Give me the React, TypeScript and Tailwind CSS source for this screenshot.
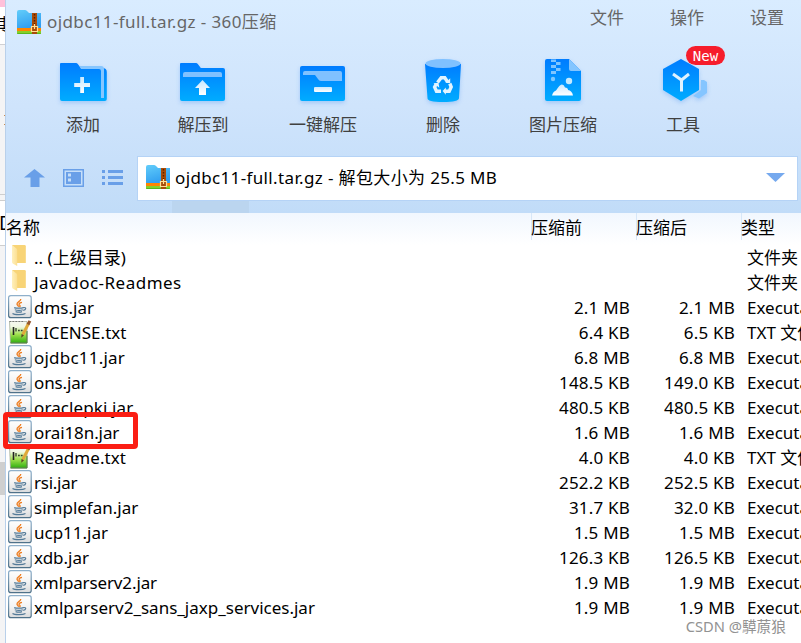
import React from "react";

const latin = "font-['Noto_Sans','Noto_Sans_CJK_SC',sans-serif]";

type Entry = { name: string; kind: "folder" | "jar" | "txt"; before?: string; after?: string; type: string; track?: string };

const entries: Entry[] = [
  { name: ".. (上级目录)", kind: "folder", type: "文件夹" },
  { name: "Javadoc-Readmes", kind: "folder", type: "文件夹", track: "tracking-[0.48px]" },
  { name: "dms.jar", kind: "jar", before: "2.1 MB", after: "2.1 MB", type: "Executable" },
  { name: "LICENSE.txt", kind: "txt", before: "6.4 KB", after: "6.5 KB", type: "TXT 文件" },
  { name: "ojdbc11.jar", kind: "jar", before: "6.8 MB", after: "6.8 MB", type: "Executable", track: "tracking-[0.22px]" },
  { name: "ons.jar", kind: "jar", before: "148.5 KB", after: "149.0 KB", type: "Executable", track: "tracking-[-0.15px]" },
  { name: "oraclepki.jar", kind: "jar", before: "480.5 KB", after: "480.5 KB", type: "Executable", track: "tracking-[0.1px]" },
  { name: "orai18n.jar", kind: "jar", before: "1.6 MB", after: "1.6 MB", type: "Executable", track: "tracking-[-0.1px]" },
  { name: "Readme.txt", kind: "txt", before: "4.0 KB", after: "4.0 KB", type: "TXT 文件", track: "tracking-[0.05px]" },
  { name: "rsi.jar", kind: "jar", before: "252.2 KB", after: "252.5 KB", type: "Executable", track: "tracking-[-0.25px]" },
  { name: "simplefan.jar", kind: "jar", before: "31.7 KB", after: "32.0 KB", type: "Executable" },
  { name: "ucp11.jar", kind: "jar", before: "1.5 MB", after: "1.5 MB", type: "Executable" },
  { name: "xdb.jar", kind: "jar", before: "126.3 KB", after: "126.5 KB", type: "Executable" },
  { name: "xmlparserv2.jar", kind: "jar", before: "1.9 MB", after: "1.9 MB", type: "Executable", track: "tracking-[-0.13px]" },
  { name: "xmlparserv2_sans_jaxp_services.jar", kind: "jar", before: "1.9 MB", after: "1.9 MB", type: "Executable" },
];

function Defs() {
  return (
    <svg width="0" height="0" className="absolute">
      <defs>
        <linearGradient id="blue" x1="0" y1="0" x2="0" y2="1">
          <stop offset="0" stopColor="#007cff" />
          <stop offset="1" stopColor="#00acff" />
        </linearGradient>
        <linearGradient id="pale" x1="0" y1="0" x2="0" y2="1">
          <stop offset="0" stopColor="#c9e8ff" />
          <stop offset="1" stopColor="#ffffff" />
        </linearGradient>
        <linearGradient id="sky" x1="0" y1="0" x2="0.4" y2="1">
          <stop offset="0" stopColor="#62cdfa" />
          <stop offset="1" stopColor="#2f9df0" />
        </linearGradient>
        <linearGradient id="silver" x1="0" y1="0" x2="0" y2="1">
          <stop offset="0" stopColor="#ffffff" />
          <stop offset="0.5" stopColor="#f4f4f4" />
          <stop offset="1" stopColor="#dadbdc" />
        </linearGradient>
        <linearGradient id="rim" x1="0" y1="0" x2="0" y2="1">
          <stop offset="0" stopColor="#8fb0cb" />
          <stop offset="1" stopColor="#4e7189" />
        </linearGradient>
        <linearGradient id="grass" x1="0" y1="0" x2="0" y2="1">
          <stop offset="0" stopColor="#f6f8f1" />
          <stop offset="0.25" stopColor="#f0f8e2" />
          <stop offset="0.6" stopColor="#9fe04d" />
          <stop offset="1" stopColor="#2fae10" />
        </linearGradient>
        <linearGradient id="gold" x1="0" y1="0" x2="1" y2="0">
          <stop offset="0" stopColor="#fff0bd" />
          <stop offset="1" stopColor="#fbdf92" />
        </linearGradient>
      </defs>
    </svg>
  );
}

function ArchiveIcon() {
  return (
    <svg width="25" height="25" viewBox="0 0 25 25" className="shrink-0">
      <path d="M0 2q0-2 2-2h6q1 0 2 1l2 2h12v16H0z" fill="url(#sky)" />
      <path d="M0 18h24v3H0z" fill="#ff8500" />
      <path d="M0 21h24v2q0 1-1 1H1q-1 0-1-1z" fill="#86cf2a" />
      <path d="M0 23h24q0 1-1 1H1q-1 0-1-1z" fill="#58b81e" />
      <path d="M15 3h5v21h-5z" fill="#a94b08" />
      <path d="M17.500 4v11" stroke="#572100" strokeWidth="1.400" strokeDasharray="1.500 1.500" />
      <path d="M14.500 16.500h6v5h-6zM17.500 14v5" fill="none" stroke="#ffdf94" strokeWidth="1.200" />
    </svg>
  );
}

function JarIcon() {
  return (
    <svg width="24" height="24" viewBox="0 0 24 24">
      <rect x="0.600" y="0.600" width="22.600" height="22" rx="2.200" fill="url(#silver)" stroke="url(#rim)" strokeWidth="1.200" />
      <path d="M12.800 4C13 6.400 8.400 7 9 9.300c.3 1 1.400 1.700 1.800 2.500M14 7.400c-3 .6-3.700 1.800-2.300 2.800.8.700.5 1.300-.3 1.800" fill="none" stroke="#ee7d20" strokeWidth="1.300" />
      <path d="M6.200 12.600c2 .8 7.300.7 9.200 0M6.800 14.700q4.300 1.300 8 0M7.600 16.600q3.500 1.100 6.400 0M15.400 12.600c3.300-.6 2.800 2.300-.2 2.700M4.500 18.400c2 1.500 10.400 1.500 13 0" fill="none" stroke="#537a98" strokeWidth="1.200" />
    </svg>
  );
}

function TxtIcon() {
  return (
    <svg width="24" height="24" viewBox="0 0 24 24" className="overflow-visible">
      <path d="M1.500 1.500h17.500v21.500H2.500z" fill="url(#grass)" stroke="#9aa392" strokeWidth=".7" />
      <path d="M1.500 1.500h14" stroke="#777" strokeWidth="1" strokeDasharray="1.500 1.500" />
      <path d="M19 11v12H2.500" fill="none" stroke="#4f7a38" strokeWidth="1" />
      <path d="M5.500 7v8" stroke="#222" strokeWidth="1.600" />
      <path d="M8 8v3.500M10 10.500h1.800M12.800 10.500h1.800" stroke="#33402b" strokeWidth="1.300" />
      <path d="M20.800 3l-6 11.500" stroke="#dfa93a" strokeWidth="3" />
      <path d="M20 4.500l1.900-3.600" stroke="#94572d" strokeWidth="3" />
      <path d="M16 15.300l-2.700 2.400.2-3.800z" fill="#5b4021" />
    </svg>
  );
}

function FolderIcon() {
  return (
    <svg width="24" height="24" viewBox="0 0 24 24">
      <path d="M4 0h12.500q1.300 0 1.300 1.300V18H8z" fill="#f8d477" />
      <path d="M4 0l4.500 3.500q.7.500.7 1.500v16L5 18.800Q4 18.300 4 17z" fill="url(#gold)" />
    </svg>
  );
}

const shadow = "drop-shadow-[0_2px_2px_rgba(80,150,240,0.35)]";

function AddIcon() {
  return (
    <svg width="48" height="48" viewBox="0 0 48 48" className={shadow}>
      <path d="M1 8q0-1 1-1h15q1 0 1.800 1l3 4h21.500q4.500 0 4.500 4v27q0 2-2 2H3q-2 0-2-2z" fill="url(#blue)" />
      <path d="M20.500 10h21.500q3 0 3 3v29h-3V15q0-2-2-2H22z" fill="#86c6ff" />
      <path d="M21.200 21h3.800v6h6v4h-6v6h-3.800v-6h-6v-4h6z" fill="url(#pale)" />
    </svg>
  );
}

function ExtractIcon() {
  return (
    <svg width="48" height="48" viewBox="0 0 48 48" className={shadow}>
      <path d="M1 8q0-1 1-1h15q1 0 1.800 1l3 4H44q2 0 2 2v29q0 2-2 2H3q-2 0-2-2z" fill="url(#blue)" />
      <path d="M4 21v-3q0-2 2-2h35q2 0 2 2v3z" fill="#80c1ff" />
      <path d="M23.500 24l7.500 8h-4v7h-7v-7h-4z" fill="url(#pale)" />
    </svg>
  );
}

function QuickIcon() {
  return (
    <svg width="48" height="48" viewBox="0 0 48 48" className={shadow}>
      <rect x="1" y="10" width="45" height="35" rx="2" fill="url(#blue)" />
      <path d="M4 19v-2q0-2 2-2h35q2 0 2 2v8H22q-2 0-3-2l-3-4z" fill="#80c1ff" />
      <rect x="15" y="31" width="18" height="5" rx="1" fill="url(#pale)" />
    </svg>
  );
}

function TrashIcon() {
  return (
    <svg width="48" height="48" viewBox="0 0 48 48" className={shadow}>
      <path d="M6 8h36l-2 34q0 4-16 4T8.500 42z" fill="url(#blue)" />
      <ellipse cx="24" cy="7.500" rx="17.500" ry="4.500" fill="#80c1ff" />
      <g fill="none" stroke="#e3f4ff" strokeWidth="3.400">
        <path d="M18.500 26.500l3.700-4.700h3.600l2.700 4" />
        <path d="M30.800 27.500l1.400 3.500-2 4.300h-4.700" />
        <path d="M22 35.300h-4.500L15.600 31l1.500-2.600" />
      </g>
      <path d="M26.500 27h4.700v-4.800zM26.800 31.500v7.200l-3.200-3.600zM14.500 27.300l5-.5.8 5z" fill="#e3f4ff" />
    </svg>
  );
}

function PictureIcon() {
  return (
    <svg width="48" height="48" viewBox="0 0 48 48" className={shadow}>
      <path d="M8 3h22l12 12v28q0 2-2 2H8q-2 0-2-2V5q0-2 2-2z" fill="url(#blue)" />
      <path d="M30 3l12 12H32q-2 0-2-2z" fill="#83c5ff" />
      <path d="M12 3.500h5V6h-5zM17 6h4.500v3H17zM12 9h5v3h-5zM17 12h4.500v3H17zM12 15h5v3h-5z" fill="#7fc5ff" />
      <circle cx="14" cy="23" r="2.200" fill="#7fc8ff" />
      <circle cx="30" cy="25" r="3.200" fill="#c5eaff" />
      <path d="M13 39.500q1-4 4-5 4-6.500 6-6 2 .2 3 3 3 .2 3 2.500 4 .5 5 5.500z" fill="url(#pale)" />
    </svg>
  );
}

function ToolIcon() {
  return (
    <svg width="48" height="48" viewBox="0 0 48 48" className={`${shadow} overflow-visible`}>
      <path d="M42 24h3l3 2v11l-8 5.500-6-2.500 8-6z" fill="#85c5ff" />
      <path d="M22 3l18 10v21L22 45 4 34V13z" fill="url(#blue)" />
      <path d="M14 18l8.500 6 7.500-6M22.500 23v12.500" fill="none" stroke="#dff2ff" strokeWidth="3" />
    </svg>
  );
}

const tools = [
  { label: "添加", icon: <AddIcon /> },
  { label: "解压到", icon: <ExtractIcon /> },
  { label: "一键解压", icon: <QuickIcon /> },
  { label: "删除", icon: <TrashIcon /> },
  { label: "图片压缩", icon: <PictureIcon /> },
  { label: "工具", icon: <ToolIcon />, badge: true },
];

function Backdrop() {
  return (
    <div className="flex h-full w-[6px] shrink-0 flex-col overflow-hidden border-r border-[#b9d0ea] bg-[#f4f4f5] text-[17px] text-black">
      <div className="h-[7px] shrink-0 bg-[#ffc0da]" />
      <div className="flex h-[38px] shrink-0 items-center justify-end border-b border-[#d0d0d3] bg-white pb-[3px]">
        <span className="mr-[-4px] leading-none">其</span>
      </div>
      <div className="flex h-[150px] shrink-0 flex-col items-end gap-[8px] border-b border-[#cecece] pt-[70px]">
        <div className="h-px w-px bg-[#c98a4e]" />
        <div className="h-px w-px bg-[#c98a4e]" />
      </div>
      <div className="h-[6px] shrink-0 border-b border-[#cecece]" />
      <div className="flex h-[45px] shrink-0 items-center border-b border-[#cecece] bg-white">
        <span className="ml-[-1px] text-[19px] leading-none">D</span>
      </div>
      <div className="h-[216px] shrink-0" />
      <div className="h-[33px] shrink-0 bg-[#cfcfcf]" />
    </div>
  );
}

export default function App() {
  return (
    <div className={`flex h-[643px] w-[801px] overflow-hidden bg-white text-[17px] leading-none text-black ${latin}`}>
      <Defs />
      <Backdrop />
      <div className="relative flex min-w-0 flex-1 flex-col">
        <div className="flex h-[213px] shrink-0 flex-col bg-linear-to-b from-[#d9ecff] via-[#cfe4fc] to-[#c1dcf8]">
          <div className="flex h-[54px] items-start justify-between pr-[17px] pl-[11px] text-[#666]">
            <div className="flex items-center gap-[5px] pt-[10px]">
              <ArchiveIcon />
              <span className="pb-[2px] tracking-[0.4px] whitespace-nowrap">ojdbc11-full.tar.gz - 360压缩</span>
            </div>
            <div className="flex gap-[46px] pt-[9px]">
              <span>文件</span>
              <span>操作</span>
              <span>设置</span>
            </div>
          </div>
          <div className="flex h-[102px] pl-[17px] text-[#404040]">
            {tools.map((t) => (
              <div key={t.label} className="relative flex w-[120px] shrink-0 flex-col items-center pt-[2px]">
                {t.icon}
                <span className="mt-[12px] whitespace-nowrap">{t.label}</span>
                {t.badge && (
                  <span className="absolute top-[-8px] left-[63px] flex h-[19px] w-[39px] items-center justify-center rounded-full bg-[#f61d2c] font-['DejaVu_Sans_Mono',monospace] text-[14px] text-white">
                    New
                  </span>
                )}
              </div>
            ))}
          </div>
          <div className="flex h-[45px] shrink-0 items-center pr-[3px] pl-[18px]">
            <svg width="113" height="24" viewBox="0 1 113 24" fill="#699fe8" className="shrink-0">
              <path d="M10.500 3L21 11.500h-5.500v9.500h-9v-9.500H0z" />
              <path d="M39 3h21v18H39zm1.500 1.500v15h18v-15z" fillRule="evenodd" />
              <path d="M42 6h15v12H42zm2 1.500v3h3v-3zm0 5v3h3v-3z" fillRule="evenodd" />
              <path d="M78 4h3v3h-3zM84 4h15v3H84zM78 10h3v3h-3zM84 10h15v3H84zM78 16h3v3h-3zM84 16h15v3H84z" />
            </svg>
            <div className="flex h-[45px] min-w-0 flex-1 items-center border border-[#b5d3f6] bg-white pr-[12px] pb-[2px] pl-[8px]">
              <ArchiveIcon />
              <span className="ml-[4px] flex-1 tracking-[0.36px] whitespace-nowrap">ojdbc11-full.tar.gz - 解包大小为 25.5 MB</span>
              <svg width="19" height="10" viewBox="0 0 19 10">
                <path d="M0 0h19l-9.500 9z" fill="#76a9ee" />
              </svg>
            </div>
          </div>
          <div className="ml-[166px] h-[12px] w-[77px] bg-[#bbd5ef]" />
        </div>
        <div className="flex h-[32px] shrink-0 bg-linear-to-b from-[#f1f7fe] to-white">
          <div className="flex-1 pt-[6px]">名称</div>
          <div className="h-[27px] w-[105px] border-l border-[#d7e7f8] pt-[6px]"><span className="-ml-px">压缩前</span></div>
          <div className="h-[27px] w-[105px] border-l border-[#d7e7f8] pt-[6px]"><span className="-ml-px">压缩后</span></div>
          <div className="h-[27px] w-[60px] border-l border-[#d7e7f8] pt-[6px]"><span className="-ml-px">类型</span></div>
        </div>
        <div className="flex flex-col">
          {entries.map((e) => (
            <div key={e.name} className="flex h-[25px] items-center whitespace-nowrap">
              <div className="ml-[2px] flex w-[26px] shrink-0 pb-[2px]">
                {e.kind === "folder" ? <FolderIcon /> : e.kind === "jar" ? <JarIcon /> : <TxtIcon />}
              </div>
              <span className={`flex-1 ${e.track ?? ""}`}>{e.name}</span>
              <span className="w-[105px] text-right tracking-[0.2px]">{e.before}</span>
              <span className="w-[105px] text-right tracking-[0.2px]">{e.after}</span>
              <span className="ml-[12px] w-[54px] overflow-hidden leading-[24px]">{e.type}</span>
            </div>
          ))}
        </div>
        <div className="absolute top-[412px] left-[-3px] h-[37px] w-[135px] rounded-[4px] border-[5px] border-[#fb1e14]" />
        <div className="absolute top-[619px] right-[15px] text-[14.7px] whitespace-nowrap text-[#929292]">CSDN @騲蒝狼</div>
      </div>
    </div>
  );
}
